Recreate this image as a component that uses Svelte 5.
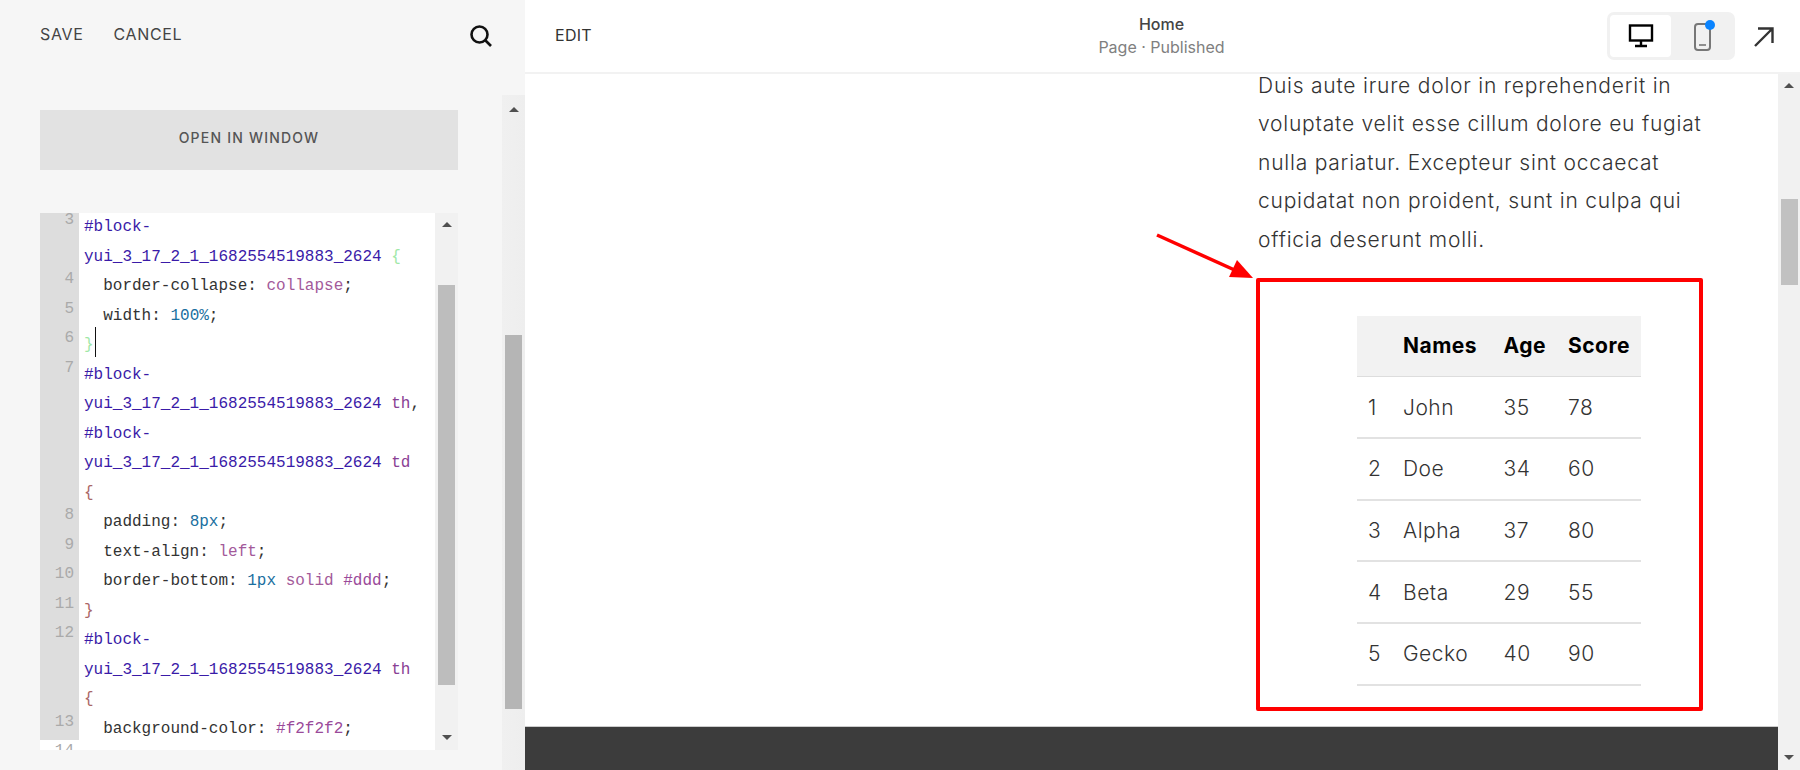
<script>
  const S = 'sel', P = 'prop', K = 'key', N = 'num', T = 'tag', B = 'brace', G = 'green', H = 'hex';
  const sel = [S, '#block-'];
  const id = [S, 'yui_3_17_2_1_1682554519883_2624'];
  const code = [
    { n: 3, lines: [[sel], [id, [G, ' {']]] },
    { n: 4, lines: [[[P, '  border-collapse: '], [K, 'collapse'], [P, ';']]] },
    { n: 5, lines: [[[P, '  width: '], [N, '100%'], [P, ';']]] },
    { n: 6, lines: [[[G, '}'], ['caret', '']]] },
    { n: 7, lines: [[sel], [id, [T, ' th'], [P, ',']], [sel], [id, [T, ' td']], [[B, '{']]] },
    { n: 8, lines: [[[P, '  padding: '], [N, '8px'], [P, ';']]] },
    { n: 9, lines: [[[P, '  text-align: '], [K, 'left'], [P, ';']]] },
    { n: 10, lines: [[[P, '  border-bottom: '], [N, '1px'], [K, ' solid '], [H, '#ddd'], [P, ';']]] },
    { n: 11, lines: [[[B, '}']]] },
    { n: 12, lines: [[sel], [id, [T, ' th']], [[B, '{']]] },
    { n: 13, lines: [[[P, '  background-color: '], [H, '#f2f2f2'], [P, ';']]] }
  ];
  const rows = [
    [1, 'John', 35, 78],
    [2, 'Doe', 34, 60],
    [3, 'Alpha', 37, 80],
    [4, 'Beta', 29, 55],
    [5, 'Gecko', 40, 90]
  ];
</script>

<div class="app">
  <aside class="side">
    <div class="side-main">
      <header class="side-top">
        <div class="actions"><span>SAVE</span><span>CANCEL</span></div>
        <svg class="search" width="24" height="24" viewBox="0 0 24 24" fill="none" stroke="#111" stroke-width="2.6">
          <circle cx="10.5" cy="10.5" r="8" />
          <path d="M16 16l6 6" />
        </svg>
      </header>
      <button class="open">OPEN IN WINDOW</button>
      <div class="editor">
        <div class="code">
          {#each code as row}
            <div class="row">
              <div class="gut">{row.n}</div>
              <div class="text">
                {#each row.lines as line}
                  <div class="line">{#each line as tok}<span class={tok[0]}>{tok[1]}</span>{/each}</div>
                {/each}
              </div>
            </div>
          {/each}
          <div class="row"><div class="gut plain">14</div></div>
        </div>
        <div class="track inner">
          <i class="up"></i>
          <div class="thumb"></div>
          <i class="down"></i>
        </div>
      </div>
    </div>
    <div class="track outer">
      <i class="up"></i>
      <div class="thumb"></div>
    </div>
  </aside>

  <main class="main">
    <header class="bar">
      <span class="edit">EDIT</span>
      <div class="title">
        <strong>Home</strong>
        <span>Page · Published</span>
      </div>
      <div class="tools">
        <div class="seg">
          <div class="seg-btn active">
            <svg width="26" height="24" viewBox="0 0 26 24" fill="none" stroke="#000" stroke-width="2.4">
              <rect x="2" y="1.5" width="22" height="15" />
              <path d="M13 17v4M7 22h12" />
            </svg>
          </div>
          <div class="seg-btn">
            <svg width="22" height="32" viewBox="0 0 22 32" fill="none">
              <rect x="2" y="4" width="15" height="26" rx="3" stroke="#777" stroke-width="2" />
              <path d="M6 25h7" stroke="#777" stroke-width="1.6" />
              <circle cx="17" cy="5" r="5" fill="#0a84ff" />
            </svg>
          </div>
        </div>
        <svg class="open-arrow" width="22" height="22" viewBox="0 0 22 22" fill="none" stroke="#333" stroke-width="2.4">
          <path d="M2 20L19 3M5 2.5h14.5V17" />
        </svg>
      </div>
    </header>

    <div class="view">
      <div class="page">
        <div class="content">
          <div class="column">
            <p>Duis aute irure dolor in reprehenderit in voluptate velit esse cillum dolore eu fugiat nulla pariatur. Excepteur sint occaecat cupidatat non proident, sunt in culpa qui officia deserunt molli.</p>
            <div class="redbox">
              <table>
                <thead>
                  <tr><th></th><th>Names</th><th>Age</th><th>Score</th></tr>
                </thead>
                <tbody>
                  {#each rows as r}
                    <tr><td>{r[0]}</td><td>{r[1]}</td><td>{r[2]}</td><td>{r[3]}</td></tr>
                  {/each}
                </tbody>
              </table>
            </div>
            <svg class="pointer" width="104" height="50" viewBox="0 0 104 50">
              <path d="M2 2L84 39" stroke="#f00" stroke-width="3.5" />
              <path d="M98 45L74 44L82 27Z" fill="#f00" />
            </svg>
          </div>
        </div>
        <footer class="foot"></footer>
      </div>
      <div class="track page-track">
        <i class="up"></i>
        <div class="thumb"></div>
        <i class="down"></i>
      </div>
    </div>
  </main>
</div>

<style>
  :global(body) { margin: 0; background: #fff; }
  .app {
    display: flex;
    width: 1800px;
    height: 770px;
    overflow: hidden;
    font-family: Inter, "Liberation Sans", sans-serif;
    color: #333;
  }
  .side {
    width: 525px;
    flex: none;
    display: flex;
    background: #f6f6f6;
  }
  .side-main {
    width: 502px;
    flex: none;
    display: flex;
    flex-direction: column;
  }
  .side-top {
    height: 68px;
    display: flex;
    align-items: center;
    justify-content: space-between;
    padding: 0 9px 0 40px;
    margin-bottom: 42px;
  }
  .actions { display: flex; gap: 30px; font-size: 16px; letter-spacing: 0.65px; color: #444; }
  .search { margin-top: 3px; }
  .open {
    margin-left: 40px;
    width: 418px;
    height: 60px;
    border: 0;
    padding: 0 0 6px;
    background: #e2e2e2;
    color: #555;
    font: 500 14px Inter, "Liberation Sans", sans-serif;
    letter-spacing: 1.2px;
    margin-bottom: 43px;
  }
  .editor {
    margin-left: 40px;
    width: 418px;
    height: 537px;
    display: flex;
    background: #fff;
  }
  .code {
    flex: 1;
    overflow: hidden;
    font: 16px/29.5px "Liberation Mono", "Courier New", monospace;
  }
  .row { display: flex; }
  .row:first-child { margin-top: -4px; }
  .gut {
    width: 34px;
    flex: none;
    padding-right: 5px;
    background: #ddd;
    color: #aaa;
    text-align: right;
    line-height: 22px;
  }
  .gut.plain { background: none; }
  .text { padding-left: 5px; flex: 1; }
  .line { white-space: pre; height: 29.5px; line-height: 37.5px; }
  .sel { color: #3a1ba8; }
  .prop { color: #333; }
  .key { color: #a35a9a; }
  .num { color: #1a6fa0; }
  .tag { color: #8a3f95; }
  .brace { color: #a66; }
  .green { color: #9fe8a8; }
  .hex { color: #9a4a9a; }
  .caret {
    display: inline-block;
    width: 1.5px;
    height: 29.5px;
    background: #111;
    vertical-align: top;
    margin-left: 1px;
  }
  .track {
    display: flex;
    flex-direction: column;
    align-items: center;
    background: #f1f1f1;
    flex: none;
  }
  .track i { display: block; width: 0; height: 0; border-left: 5px solid transparent; border-right: 5px solid transparent; }
  .up { border-bottom: 5px solid #505050; margin-top: 9px; }
  .down { border-top: 5px solid #505050; margin-top: auto; margin-bottom: 10px; }
  .inner { width: 23px; }
  .inner .thumb { width: 17px; height: 400px; margin-top: 58px; background: #bdbdbd; }
  .outer { width: 23px; height: 675px; margin-top: 95px; background: linear-gradient(90deg, #f0f0f0, #eee); }
  .outer .up { margin-top: 12px; }
  .outer .thumb { width: 17px; height: 374px; margin-top: 223px; background: #b5b5b5; }
  .main { flex: 1; display: flex; flex-direction: column; min-width: 0; background: #fff; }
  .bar {
    height: 72px;
    flex: none;
    display: grid;
    grid-template-columns: 1fr auto 1fr;
    align-items: center;
    padding: 0 25px 0 30px;
    border-bottom: 2px solid #f2f2f2;
  }
  .edit { font-size: 16px; letter-spacing: 0.3px; color: #333; margin-top: -3px; }
  .title {
    display: flex;
    flex-direction: column;
    align-items: center;
    gap: 3px;
    font-size: 16px;
    line-height: 20px;
    margin: -2px 0 0 -7px;
  }
  .title strong { font-weight: 500; color: #444; }
  .title span { color: #808080; }
  .tools { display: flex; justify-content: flex-end; align-items: center; gap: 18px; }
  .seg {
    display: flex;
    width: 128px;
    height: 48px;
    box-sizing: border-box;
    padding: 3px;
    background: #f1f1f1;
    border-radius: 7px;
  }
  .seg-btn { display: flex; align-items: center; justify-content: center; flex: 1; border-radius: 4px; }
  .seg-btn.active { flex: none; width: 61px; background: #fff; }
  .seg-btn:not(.active) { padding-left: 4px; }
  .open-arrow { margin-top: 1px; }
  .view { flex: 1; display: flex; min-height: 0; }
  .page { flex: 1; display: flex; flex-direction: column; min-width: 0; }
  .content { flex: 1; overflow: hidden; min-height: 0; padding-left: 733px; }
  .column { width: 456px; position: relative; margin-top: -7px; }
  p {
    margin: 0 0 18.5px;
    font-size: 21px;
    font-weight: 300;
    line-height: 38.4px;
    color: #333;
    letter-spacing: 0.78px;
  }
  .redbox {
    margin-left: -2px;
    width: 447px;
    height: 433px;
    box-sizing: border-box;
    border: 4px solid #f00;
    border-radius: 2px;
    padding: 34px 0 0 97px;
  }
  table { border-collapse: collapse; table-layout: fixed; width: 284px; font-size: 21px; letter-spacing: 0.5px; }
  th, td { box-sizing: border-box; padding: 0 0 0 11px; text-align: left; }
  th:nth-child(1) { width: 35px; }
  th:nth-child(2) { width: 100.5px; }
  th:nth-child(3) { width: 64.5px; }
  th {
    height: 61px;
    background: #f2f2f2;
    color: #000;
    font-weight: 700;
    border-bottom: 1px solid #ddd;
  }
  td {
    height: 61.6px;
    font-weight: 300;
    color: #333;
    border-bottom: 2px solid #e2e2e2;
  }
  .pointer { position: absolute; left: -103px; top: 166px; }
  .foot { height: 43px; flex: none; background: #3c3c3c; border-top: 1px solid #ccc; }
  .page-track { width: 22px; }
  .page-track .thumb { width: 17px; height: 86px; margin-top: 111px; background: #c1c1c1; }
</style>
